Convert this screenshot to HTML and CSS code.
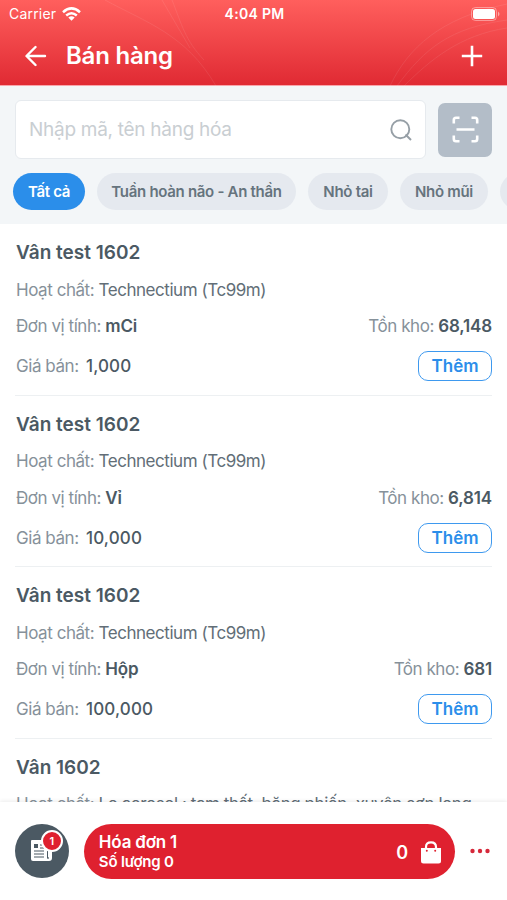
FILE: index.html
```html
<!DOCTYPE html>
<html lang="vi">
<head>
    <meta charset="UTF-8">
    <meta name="viewport" content="width=device-width, initial-scale=1.0">
    <title>Bán hàng</title>
    <link rel="stylesheet" href="styles.css">
</head>
<body>
    <header class="header">
        <svg class="header-lines" viewBox="0 0 507 86" fill="none" stroke="#fff">
            <path d="M105 0C145 22 186 34 216 86M162 0L190 48M172 0C182 25 185 40 204 60M390 86C408 48 440 18 507 4M397 86C425 48 450 28 507 20M404 86C430 60 460 35 507 28" />
        </svg>
        <div class="status-bar">
            <div class="carrier">
                <span>Carrier</span>
                <svg width="19" height="14" viewBox="0 0 19 14" fill="none" stroke="#fff" stroke-width="2.5">
                    <path d="M1 5.2Q9.5 -2.4 18 5.2M4.2 8.5Q9.5 4 14.8 8.5" />
                    <path d="M6.3 10.5Q9.5 7.8 12.7 10.5L9.5 13.8Z" fill="#fff" stroke="none" />
                </svg>
            </div>
            <span class="time">4:04 PM</span>
            <svg class="battery" width="29" height="14" viewBox="0 0 29 14">
                <rect x=".5" y=".5" width="25" height="13" rx="4" fill="none" stroke="#fff" stroke-opacity=".4" />
                <rect x="2" y="2" width="22" height="10" rx="2.5" fill="#fff" />
                <path d="M27 4.5Q30 7 27 9.5Z" fill="#fff" fill-opacity=".5" />
            </svg>
        </div>
        <div class="nav">
            <svg width="22" height="22" viewBox="0 0 22 22" fill="none" stroke="#fff" stroke-width="2.4" stroke-linecap="round" stroke-linejoin="round">
                <path d="M20 11H2M10.5 2L1.5 11L10.5 20" />
            </svg>
            <h1>Bán hàng</h1>
            <svg width="22" height="22" viewBox="0 0 22 22" fill="none" stroke="#fff" stroke-width="2.6">
                <path d="M11 .8V21.2M.8 11H21.2" />
            </svg>
        </div>
    </header>

    <section class="filters">
        <div class="search-row">
            <div class="search">
                <span>Nhập mã, tên hàng hóa</span>
                <svg width="22" height="22" viewBox="0 0 22 22" fill="none" stroke="#969fa6" stroke-width="1.9">
                    <circle cx="10.3" cy="10.3" r="9" />
                    <path d="M15.5 15.5L21 21" />
                </svg>
            </div>
            <div class="scan">
                <svg width="27" height="27" viewBox="0 0 27 27" fill="none" stroke="#fff" stroke-width="2.6">
                    <path d="M1.8 7.5V4Q1.8 1.8 4 1.8H7.5M19.5 1.8H23Q25.2 1.8 25.2 4V7.5M25.2 19.5V23Q25.2 25.2 23 25.2H19.5M7.5 25.2H4Q1.8 25.2 1.8 23V19.5M4.5 13.5H22.5" />
                </svg>
            </div>
        </div>
        <div class="chips">
            <span class="chip chip-all active">Tất cả</span>
            <span class="chip chip-brain">Tuần hoàn não - An thần</span>
            <span class="chip chip-ear">Nhỏ tai</span>
            <span class="chip chip-nose">Nhỏ mũi</span>
            <span class="chip chip-next"></span>
        </div>
    </section>

    <main class="products">
        <article class="product">
            <h2>Vân test 1602</h2>
            <div class="row ingredient"><span>Hoạt chất: <span class="value">Technectium (Tc99m)</span></span></div>
            <div class="row unit">
                <span>Đơn vị tính: <b>mCi</b></span>
                <span>Tồn kho: <b>68,148</b></span>
            </div>
            <div class="row price">
                <span>Giá bán: <span class="amount">1,000</span></span>
                <button>Thêm</button>
            </div>
        </article>
        <article class="product">
            <h2>Vân test 1602</h2>
            <div class="row ingredient"><span>Hoạt chất: <span class="value">Technectium (Tc99m)</span></span></div>
            <div class="row unit">
                <span>Đơn vị tính: <b>Vỉ</b></span>
                <span>Tồn kho: <b>6,814</b></span>
            </div>
            <div class="row price">
                <span>Giá bán: <span class="amount">10,000</span></span>
                <button>Thêm</button>
            </div>
        </article>
        <article class="product">
            <h2>Vân test 1602</h2>
            <div class="row ingredient"><span>Hoạt chất: <span class="value">Technectium (Tc99m)</span></span></div>
            <div class="row unit">
                <span>Đơn vị tính: <b>Hộp</b></span>
                <span>Tồn kho: <b>681</b></span>
            </div>
            <div class="row price">
                <span>Giá bán: <span class="amount">100,000</span></span>
                <button>Thêm</button>
            </div>
        </article>
        <article class="product">
            <h2>Vân 1602</h2>
            <div class="row ingredient"><span>Hoạt chất: <span class="value">Lo aerosol : tam thất, băng phiến, xuyên sơn long</span></span></div>
        </article>
    </main>

    <footer class="cart-bar">
        <div class="invoices">
            <svg width="24" height="24" viewBox="0 0 24 24">
                <path d="M2 1H17V19H18V7H22V19Q22 22 19 22H3Q1 22 1 20V2Q1 1 2 1Z" fill="#fff" />
                <path d="M4 5H8V9H4Z" fill="#4b5963" />
                <path d="M10 6H14M10 9H14M4 12H14M4 15H14M4 18H14M18 18V20" fill="none" stroke="#4b5963" stroke-width="1.2" />
            </svg>
            <span class="badge">1</span>
        </div>
        <div class="cart">
            <div class="cart-info">
                <div class="cart-name">Hóa đơn 1</div>
                <div class="cart-count">Số lượng 0</div>
            </div>
            <span class="total">0</span>
            <svg width="20" height="23" viewBox="0 0 20 23">
                <path d="M5 8V6Q5 1.3 10 1.3Q15 1.3 15 6V8" fill="none" stroke="#fff" stroke-width="2.2" />
                <path d="M0 7H20V20Q20 22.5 17.5 22.5H2.5Q0 22.5 0 20Z" fill="#fff" />
                <circle cx="5.8" cy="9.8" r="1" fill="#df212f" />
                <circle cx="14.2" cy="9.8" r="1" fill="#df212f" />
            </svg>
        </div>
        <svg width="20" height="6" viewBox="0 0 20 6" fill="#d6283a">
            <circle cx="2.5" cy="3" r="2.2" />
            <circle cx="10" cy="3" r="2.2" />
            <circle cx="17.5" cy="3" r="2.2" />
        </svg>
    </footer>
</body>
</html>
```
FILE: styles.css
```css
* { box-sizing: border-box; }
body { margin: 0; height: 900px; display: flex; flex-direction: column; overflow: hidden; background: #fff; color: #4b5963; font-family: Inter, "Noto Sans", sans-serif; }
h1, h2 { margin: 0; }
svg { flex-shrink: 0; display: block; }

.header { position: relative; height: 86px; flex-shrink: 0; color: #fff; background: linear-gradient(#ff5f5d, #e02a33); border-bottom: 1px solid #f9a5ab; }
.header-lines { position: absolute; inset: 0; opacity: .08; }
.status-bar { display: grid; grid-template-columns: 1fr auto 1fr; align-items: center; height: 27px; padding: 0 7px 0 9px; font-size: 14px; }
.carrier { display: flex; align-items: center; gap: 6px; letter-spacing: .2px; }
.time { font-weight: 600; letter-spacing: .3px; }
.battery { justify-self: end; }
.nav { display: flex; align-items: center; height: 57px; padding: 0 24px 0 25px; }
.nav h1 { flex: 1; margin-left: 19px; font-size: 24px; font-weight: 600; letter-spacing: -.2px; }

.filters { height: 138px; flex-shrink: 0; padding: 14px 0 0; background: #f3f6f8; }
.search-row { display: flex; align-items: center; gap: 12px; padding: 0 15px; }
.search { flex: 1; height: 59px; display: flex; align-items: center; justify-content: space-between; padding: 0 13px; background: #fff; border: 1px solid #e6eaee; border-radius: 6px; color: #c9ced2; font-size: 19px; letter-spacing: -.28px; }
.scan { width: 54px; height: 54px; display: flex; align-items: center; justify-content: center; background: #b3bdc8; border-radius: 7px; }
.chips { display: flex; gap: 12px; margin-top: 14px; padding-left: 13px; overflow: hidden; }
.chip { flex-shrink: 0; height: 37px; border-radius: 19px; background: #e5e9ef; color: #66747e; font-size: 15px; font-weight: 600; letter-spacing: -.3px; line-height: 38px; text-align: center; white-space: nowrap; }
.chip.active { background: #2b8eea; color: #fff; }
.chip-all { width: 72px; }
.chip-brain { width: 199px; }
.chip-ear { width: 80px; }
.chip-nose { width: 88px; }
.chip-next { width: 80px; }

.products { flex: 1; min-height: 0; overflow: hidden; padding: 0 15px; }
.product { height: 171.5px; padding: 12px 0 0 1px; border-bottom: 1px solid #edf0f2; }
.product h2 { height: 32px; line-height: 34px; font-size: 19px; font-weight: 600; }
.row { display: flex; align-items: center; justify-content: space-between; font-size: 17px; letter-spacing: -.45px; color: #86919a; white-space: nowrap; }
.row b, .amount { color: #4b5963; }
.row b { font-weight: 600; letter-spacing: -.15px; }
.value { color: #626e77; }
.amount { margin-left: 3px; font-weight: 500; letter-spacing: .15px; }
.ingredient { height: 43px; }
.unit { height: 30px; }
.price { height: 50px; }
.row button { width: 74px; height: 30px; padding: 0; background: #fff; border: 1.5px solid #3e99ef; border-radius: 10px; color: #2b8eea; font-family: inherit; font-size: 17px; font-weight: 600; }

.cart-bar { height: 98px; flex-shrink: 0; display: flex; align-items: center; padding: 0 17px 0 15px; background: #fff; box-shadow: 0 -1px 4px rgba(0, 0, 0, .08); }
.invoices { position: relative; width: 54px; height: 54px; display: flex; align-items: center; justify-content: center; border-radius: 50%; background: #4b5963; }
.badge { position: absolute; top: 6px; right: 6px; width: 22px; height: 22px; border: 2px solid #fff; border-radius: 50%; background: #df212f; color: #fff; font-size: 11px; font-weight: 600; line-height: 18px; text-align: center; }
.cart { width: 372px; height: 55px; display: flex; align-items: center; margin: 0 15px 0 15px; padding: 2px 14px 0 15px; border-radius: 28px; background: #df212f; color: #fff; font-weight: 600; letter-spacing: -.2px; }
.cart-info { flex: 1; }
.cart-name { font-size: 17px; line-height: 20px; }
.cart-count { font-size: 15px; line-height: 20px; }
.total { margin-right: 13px; font-size: 18px; }
```
